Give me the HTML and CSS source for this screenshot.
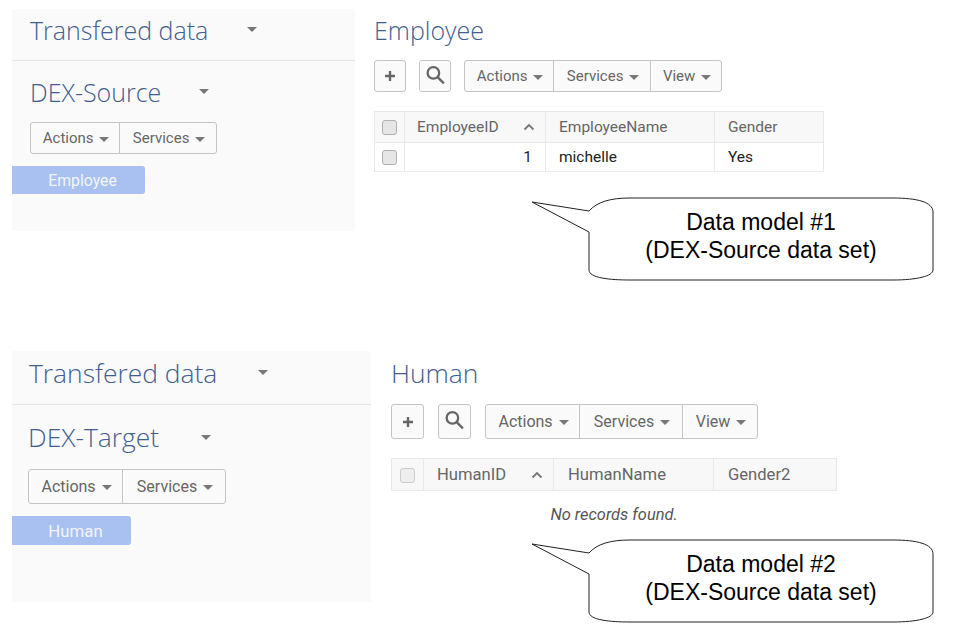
FILE: index.html
```html
<!DOCTYPE html>
<html lang="en">
<head>
  <meta charset="UTF-8">
  <meta name="viewport" content="width=device-width, initial-scale=1.0">
  <title>Data models</title>
  <link rel="stylesheet" href="styles.css">
</head>
<body>
  <!-- Data model 1 -->
  <section class="shot shot-source">
    <aside class="side">
      <div class="side-head">
        <span class="title title-data">Transfered data</span>
        <span class="caret caret-title"></span>
      </div>
      <div class="side-set">
        <span class="title title-set">DEX-Source</span>
        <span class="caret caret-title"></span>
      </div>
      <div class="btn-group side-btns">
        <button class="btn btn-actions">Actions <span class="caret"></span></button>
        <button class="btn btn-services">Services <span class="caret"></span></button>
      </div>
      <div class="pill">Employee</div>
    </aside>

    <main class="content">
      <h2 class="title content-title">Employee</h2>
      <div class="toolbar">
        <button class="btn btn-icon" aria-label="Add">
          <svg class="icon" viewBox="0 0 16 16"><path d="M8 3v10M3 8h10"/></svg>
        </button>
        <button class="btn btn-icon" aria-label="Search">
          <svg class="icon icon-search" viewBox="0 0 20 20"><circle cx="8" cy="7.5" r="5.5"/><path d="M12 11.5l6 6"/></svg>
        </button>
        <div class="btn-group">
          <button class="btn btn-actions">Actions <span class="caret"></span></button>
          <button class="btn btn-services">Services <span class="caret"></span></button>
          <button class="btn btn-view">View <span class="caret"></span></button>
        </div>
      </div>
      <table class="grid">
        <thead>
          <tr>
            <th class="col-check"><span class="check"></span></th>
            <th class="col-id">
              <div class="sort-cell">EmployeeID
                <svg class="sort" viewBox="0 0 12 8"><path d="M1.5 6.5L6 2l4.5 4.5"/></svg>
              </div>
            </th>
            <th class="col-name">EmployeeName</th>
            <th class="col-last">Gender</th>
          </tr>
        </thead>
        <tbody>
          <tr>
            <td><span class="check"></span></td>
            <td class="num">1</td>
            <td>michelle</td>
            <td>Yes</td>
          </tr>
        </tbody>
      </table>
    </main>

    <div class="callout">
      <svg class="callout-shape" viewBox="0 0 420 100">
        <path d="M7 10L64 19C72 10 85 6 105 6H368C392 6 408 10 408 20V78C408 84 392 88 368 88H105C85 88 64 86 64 78V40Z"/>
      </svg>
      <p class="callout-text">Data model #1<br>(DEX-Source data set)</p>
    </div>
  </section>

  <!-- Data model 2 -->
  <section class="shot shot-target">
    <aside class="side">
      <div class="side-head">
        <span class="title title-data">Transfered data</span>
        <span class="caret caret-title"></span>
      </div>
      <div class="side-set">
        <span class="title title-set">DEX-Target</span>
        <span class="caret caret-title"></span>
      </div>
      <div class="btn-group side-btns">
        <button class="btn btn-actions">Actions <span class="caret"></span></button>
        <button class="btn btn-services">Services <span class="caret"></span></button>
      </div>
      <div class="pill">Human</div>
    </aside>

    <main class="content">
      <h2 class="title content-title">Human</h2>
      <div class="toolbar">
        <button class="btn btn-icon" aria-label="Add">
          <svg class="icon" viewBox="0 0 16 16"><path d="M8 3v10M3 8h10"/></svg>
        </button>
        <button class="btn btn-icon" aria-label="Search">
          <svg class="icon icon-search" viewBox="0 0 20 20"><circle cx="8" cy="7.5" r="5.5"/><path d="M12 11.5l6 6"/></svg>
        </button>
        <div class="btn-group">
          <button class="btn btn-actions">Actions <span class="caret"></span></button>
          <button class="btn btn-services">Services <span class="caret"></span></button>
          <button class="btn btn-view">View <span class="caret"></span></button>
        </div>
      </div>
      <table class="grid">
        <thead>
          <tr>
            <th class="col-check"><span class="check"></span></th>
            <th class="col-id">
              <div class="sort-cell">HumanID
                <svg class="sort" viewBox="0 0 12 8"><path d="M1.5 6.5L6 2l4.5 4.5"/></svg>
              </div>
            </th>
            <th class="col-name">HumanName</th>
            <th class="col-last">Gender2</th>
          </tr>
        </thead>
      </table>
      <p class="empty">No records found.</p>
    </main>

    <div class="callout">
      <svg class="callout-shape" viewBox="0 0 420 100">
        <path d="M7 10L64 19C72 10 85 6 105 6H368C392 6 408 10 408 20V78C408 84 392 88 368 88H105C85 88 64 86 64 78V40Z"/>
      </svg>
      <p class="callout-text">Data model #2<br>(DEX-Source data set)</p>
    </div>
  </section>
</body>
</html>
```

FILE: styles.css
```css
/* General Styles */
html, body {
  min-height: 641px;
}

body {
  margin: 0;
  background: #fff;
  font-family: Roboto, Arial, sans-serif;
  color: #555;
}

.shot {
  position: relative;
  display: flex;
  align-items: flex-start;
  margin-left: 12px;
}

/* Sizes differ a little between the two captures */
.shot-source {
  --side-w: 343px;
  --side-h: 222px;
  --head-h: 51px;
  --set-h: 61px;
  --title-size: 25px;
  --btn-size: 15px;
  --btn-h: 32px;
  --actions-w: 90px;
  --services-w: 98px;
  --view-w: 72px;
  --icon-w: 32px;
  --pill-w: 133px;
  --pill-h: 28px;
  --pill-size: 15.8px;
  --head-x: 18px;
  margin-top: 9px;
}

.shot-target {
  --side-w: 359px;
  --side-h: 251px;
  --head-h: 53px;
  --set-h: 64px;
  --title-size: 26.4px;
  --btn-size: 16px;
  --btn-h: 35px;
  --actions-w: 95px;
  --services-w: 104px;
  --view-w: 76px;
  --icon-w: 33px;
  --pill-w: 119px;
  --pill-h: 29px;
  --pill-size: 16.8px;
  --head-x: 16px;
  margin-top: 120px;
}

/* Sidebar */
.side {
  width: var(--side-w);
  height: var(--side-h);
  flex: none;
  background: #fafafa;
}

.side-head {
  display: flex;
  align-items: center;
  height: calc(var(--head-h) - 10px);
  padding: 0 0 10px var(--head-x);
  border-bottom: 1px solid #e4e4e4;
}

.side-set {
  display: flex;
  align-items: center;
  height: var(--set-h);
  padding-left: var(--head-x);
}

.title {
  font-family: "Open Sans", Arial, sans-serif;
  font-weight: 300;
  font-size: var(--title-size);
  color: #42608f;
}

.title-data {
  width: 215px;
}

.shot-target .title-data {
  width: 227px;
  margin-left: 1px;
}

.title-set {
  width: 167px;
}

.shot-target .title-set {
  width: 171px;
}

.side-btns {
  margin-left: var(--head-x);
}

.pill {
  width: var(--pill-w);
  height: var(--pill-h);
  box-sizing: border-box;
  margin-top: 12px;
  padding: 1px 0 0 8px;
  background: #a8c1f0;
  border-radius: 0 3px 3px 0;
  color: #f2f5fc;
  font-size: var(--pill-size);
  line-height: var(--pill-h);
  text-align: center;
}

/* Buttons */
.btn {
  height: var(--btn-h);
  padding: 0 0 0 2px;
  background: #fafafa;
  border: 1px solid #c4c4c4;
  border-radius: 3px;
  font-family: Roboto, Arial, sans-serif;
  font-size: var(--btn-size);
  color: #666;
}

.btn-group {
  display: inline-flex;
}

.btn-group .btn {
  border-radius: 0;
  margin-left: -1px;
}

.btn-group .btn:first-child {
  margin-left: 0;
  border-radius: 3px 0 0 3px;
}

.btn-group .btn:last-child {
  border-radius: 0 3px 3px 0;
}

.btn-actions {
  width: var(--actions-w);
}

.btn-services {
  width: var(--services-w);
}

.btn-view {
  width: var(--view-w);
}

.btn-icon {
  width: var(--icon-w);
  padding: 0;
  display: flex;
  align-items: center;
  justify-content: center;
}

.caret {
  display: inline-block;
  width: 0;
  height: 0;
  margin-left: 2px;
  vertical-align: middle;
  border-top: 5px solid #777;
  border-left: 5px solid transparent;
  border-right: 5px solid transparent;
}

.icon {
  width: 16px;
  height: 16px;
  fill: none;
  stroke: #666;
  stroke-width: 2.4;
}

.icon-search {
  width: 21px;
  height: 21px;
  margin-bottom: 2px;
  stroke-width: 2.2;
}

/* Main area */
.content {
  flex: none;
  padding-left: 19px;
}

.shot-target .content {
  padding-left: 20px;
}

.content-title {
  margin: 0;
  height: 51px;
  line-height: 42px;
}

.shot-target .content-title {
  height: 53px;
  line-height: 44px;
}

.toolbar {
  display: flex;
  gap: 13px;
}

.shot-target .toolbar {
  gap: 14px;
}

/* Table */
.grid {
  margin-top: 19px;
  border-collapse: collapse;
  table-layout: fixed;
  font-size: 15.5px;
  width: 450px;
  border: 1px solid #e4e4e4;
}

.shot-target .grid {
  width: 446px;
  font-size: 16.6px;
}

.grid th,
.grid td {
  box-sizing: border-box;
  height: 29px;
  padding: 0 0 0 13px;
  border: 1px solid #e8e8e8;
  text-align: left;
}

.grid th {
  height: 31px;
  background: #f8f8f8;
  font-weight: 400;
  color: #666;
}

.grid td {
  background: #fff;
  color: #222;
}

.shot-target .grid th {
  height: 32px;
  padding-left: 14px;
}

.col-check {
  width: 30px;
}

.col-id {
  width: 141px;
}

.col-name {
  width: 169px;
}

.shot-target .col-check {
  width: 32px;
}

.shot-target .col-id {
  width: 130px;
}

.shot-target .col-name {
  width: 160px;
}

.grid .col-check,
.grid td:first-child,
.shot-target .grid .col-check {
  padding: 0;
  text-align: center;
}

.grid .col-id {
  padding-left: 12px;
}

.shot-target .grid .col-id {
  padding-left: 13px;
}

.grid .num {
  padding: 0 13px 0 0;
  text-align: right;
}

.sort-cell {
  display: flex;
  align-items: center;
  justify-content: space-between;
  padding-right: 10px;
}

.sort {
  width: 12px;
  height: 8px;
  fill: none;
  stroke: #777;
  stroke-width: 1.8;
}

.check {
  display: inline-block;
  width: 13px;
  height: 13px;
  vertical-align: middle;
  background: #e6e6e6;
  border: 1px solid #b0b0b0;
  border-radius: 3px;
}

.shot-target .check {
  background: #eee;
  border-color: #ccc;
}

.empty {
  margin: 14px 0 0;
  font-size: 16.4px;
  font-style: italic;
  text-align: center;
  color: #555;
}

/* Callouts drawn over the screenshots */
.callout {
  position: absolute;
  left: 513px;
  top: 183px;
  width: 420px;
  height: 100px;
}

.callout-shape {
  display: block;
  width: 420px;
  height: 100px;
  fill: #fff;
  stroke: #222;
  stroke-width: 1;
}

.callout-text {
  position: absolute;
  left: 64px;
  top: 16px;
  width: 344px;
  margin: 0;
  font-family: "Liberation Sans", Arial, sans-serif;
  font-size: 23px;
  line-height: 28px;
  text-align: center;
  color: #000;
}
```
